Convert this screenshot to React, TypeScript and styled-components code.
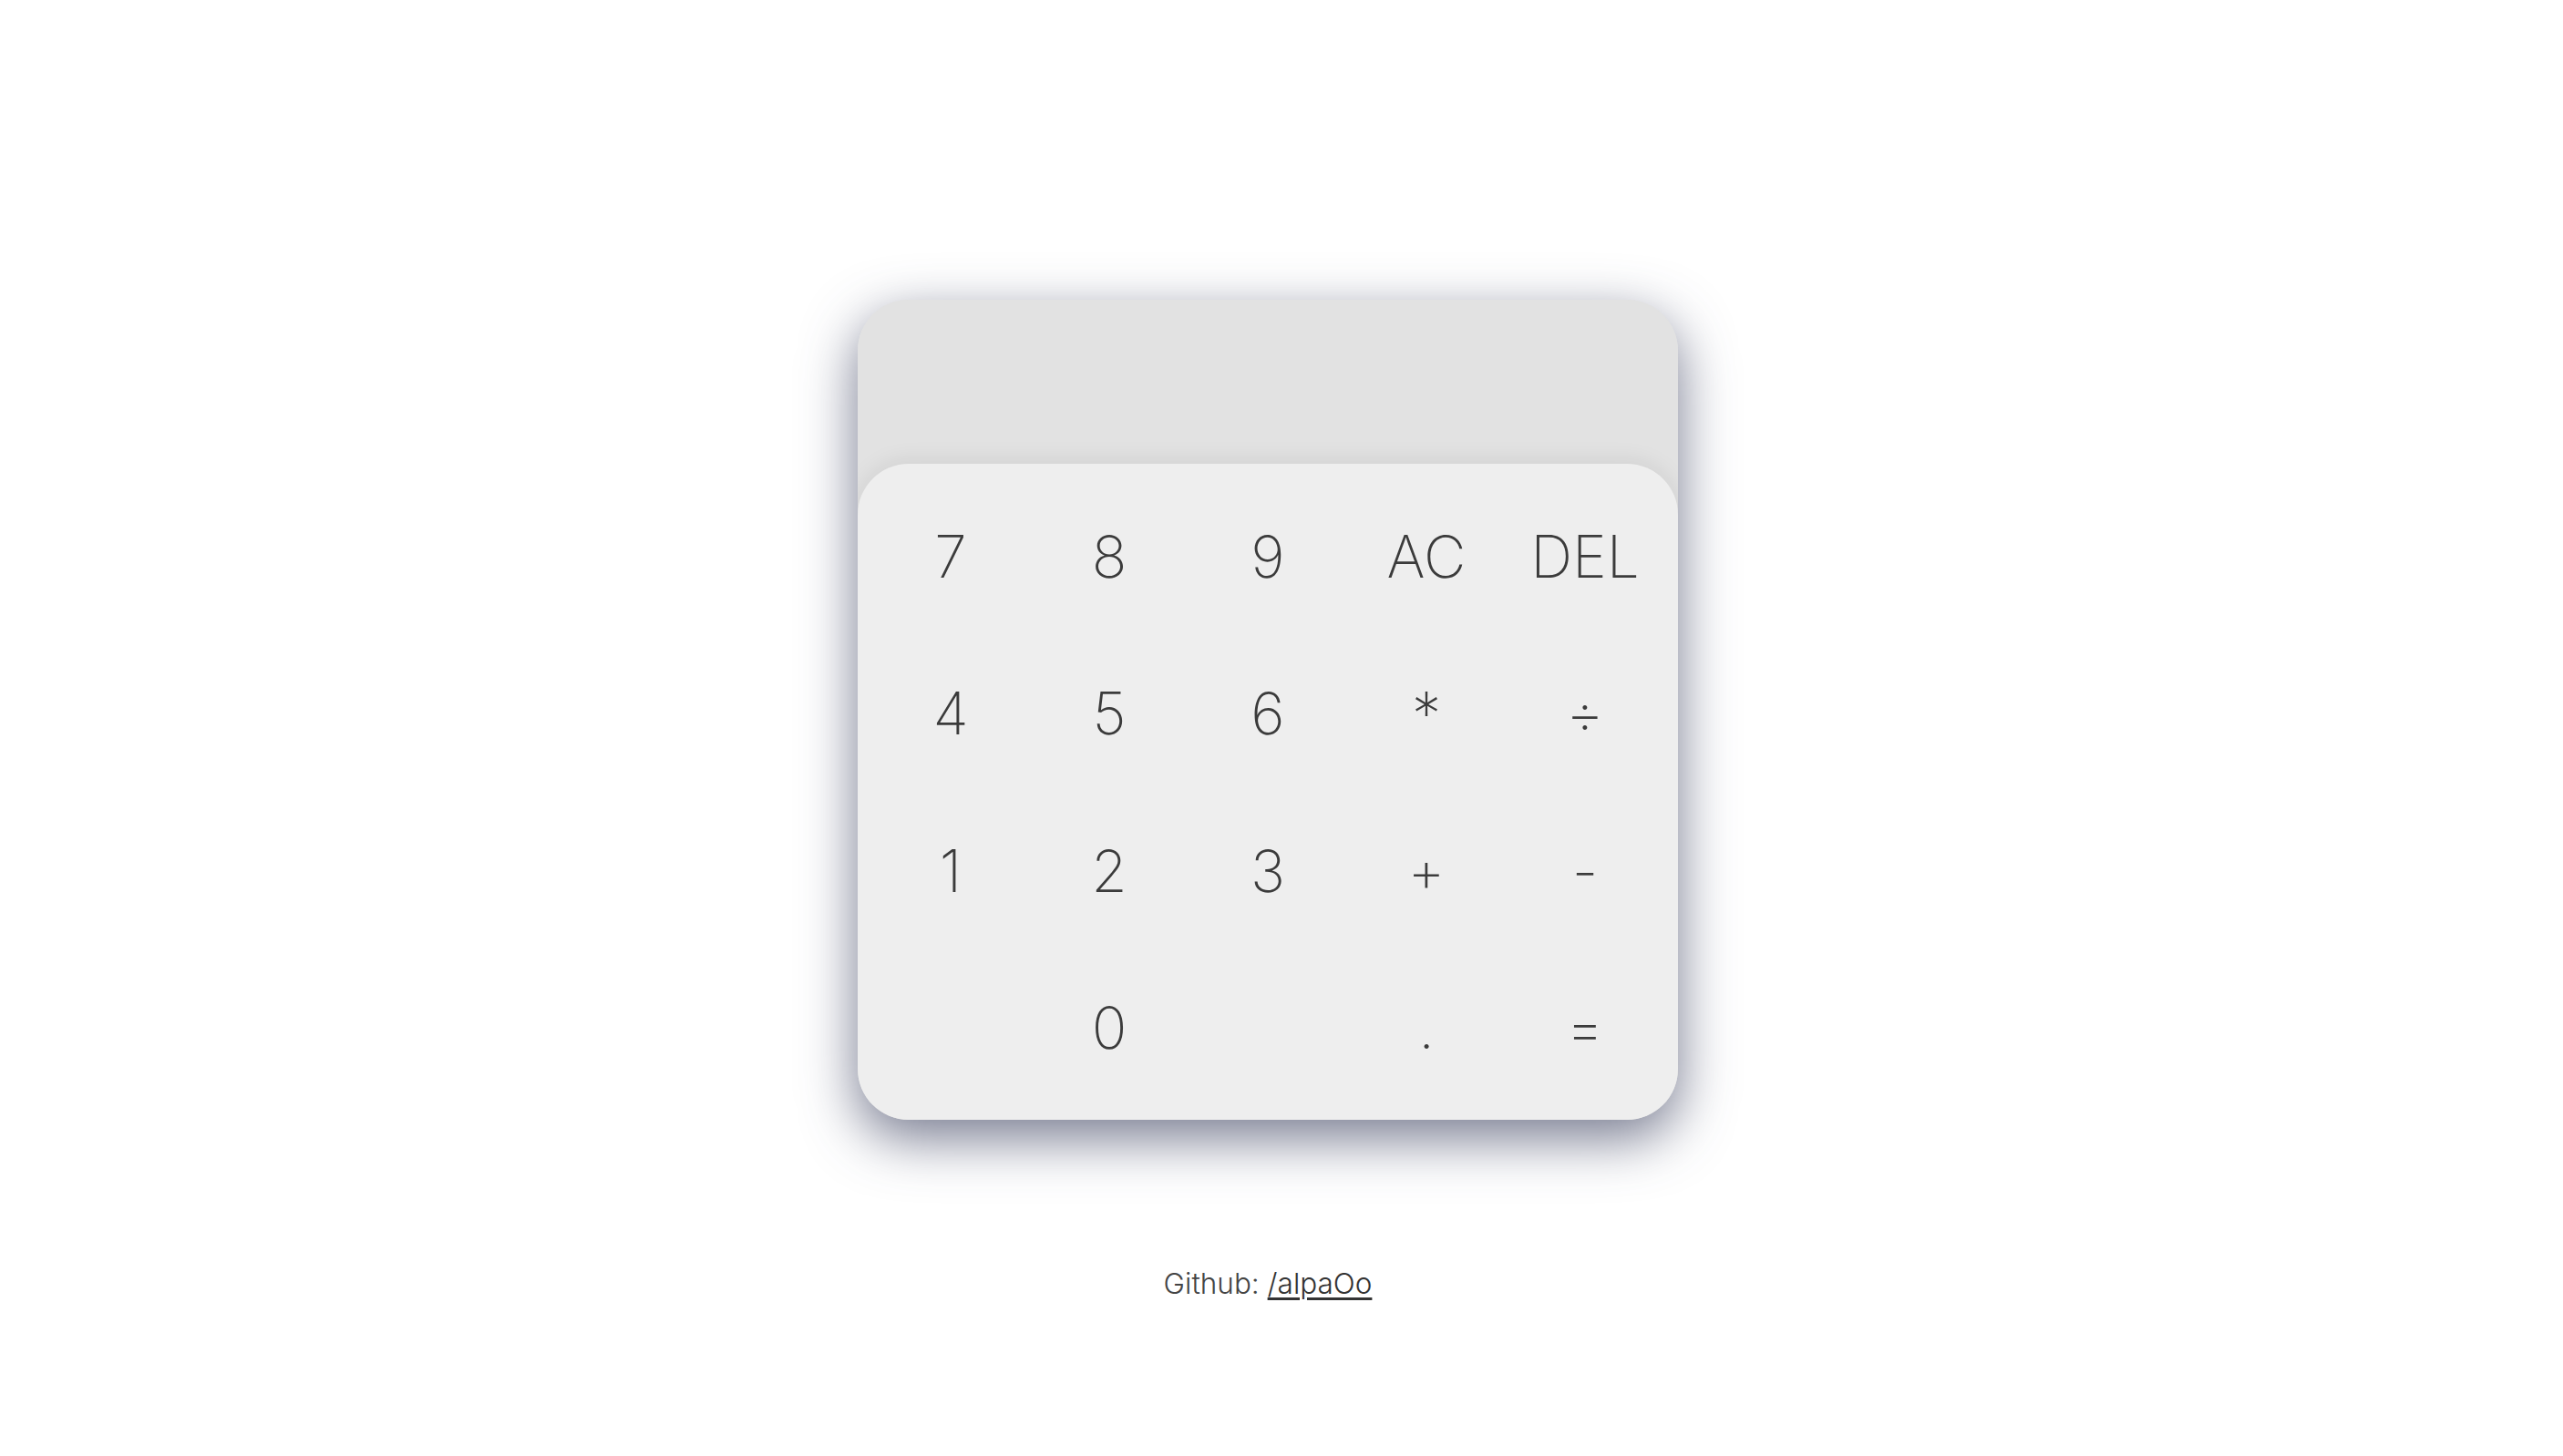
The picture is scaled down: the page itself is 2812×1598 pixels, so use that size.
import React from "react";
import styled, { createGlobalStyle } from "styled-components";

const GlobalStyle = createGlobalStyle`
  html, body {
    margin: 0;
    padding: 0;
    background: #ffffff;
    font-family: Inter, "Noto Sans", sans-serif;
  }
`;

const Page = styled.main`
  box-sizing: border-box;
  min-height: 100vh;
  padding: 329px 30px 0 0;
  display: flex;
  flex-direction: column;
  align-items: center;
`;

const Calculator = styled.div`
  width: 900px;
  height: 900px;
  border-radius: 56px;
  background: #e2e2e2;
  box-shadow: 0 20px 60px rgba(60, 65, 95, 0.7);
  display: flex;
  flex-direction: column;
  overflow: hidden;
`;

const Display = styled.div`
  height: 180px;
  flex: none;
  background: #e2e2e2;
`;

const Keypad = styled.div`
  flex: 1;
  box-sizing: border-box;
  padding: 15px;
  background: #eeeeee;
  border-radius: 56px 56px 0 0;
  box-shadow: 0 -4px 24px rgba(0, 0, 0, 0.08);
  display: grid;
  grid-template-columns: repeat(5, 1fr);
  grid-template-rows: repeat(4, 1fr);
`;

const Key = styled.button`
  border: none;
  background: transparent;
  padding: 0;
  margin: 0;
  font-family: Inter, "Noto Sans", sans-serif;
  font-weight: 250;
  font-size: 64px;
  color: #3b3b3b;
  display: flex;
  align-items: center;
  justify-content: center;
  cursor: pointer;
`;

const Empty = styled.div``;

const Footer = styled.p`
  margin: 160px 0 0;
  font-family: Inter, "Noto Sans", sans-serif;
  font-weight: 300;
  font-size: 31.5px;
  color: #444444;
`;

const Link = styled.a`
  color: #333333;
  text-decoration: underline;
  text-underline-offset: 4px;
`;

const keys: (string | null)[] = [
  "7", "8", "9", "AC", "DEL",
  "4", "5", "6", "*", "÷",
  "1", "2", "3", "+", "-",
  null, "0", null, ".", "=",
];

export default function App() {
  return (
    <>
      <GlobalStyle />
      <Page>
        <Calculator>
          <Display />
          <Keypad>
            {keys.map((k, i) =>
              k === null ? <Empty key={i} /> : <Key key={i}>{k}</Key>
            )}
          </Keypad>
        </Calculator>
        <Footer>
          Github: <Link href="#">/alpaOo</Link>
        </Footer>
      </Page>
    </>
  );
}
